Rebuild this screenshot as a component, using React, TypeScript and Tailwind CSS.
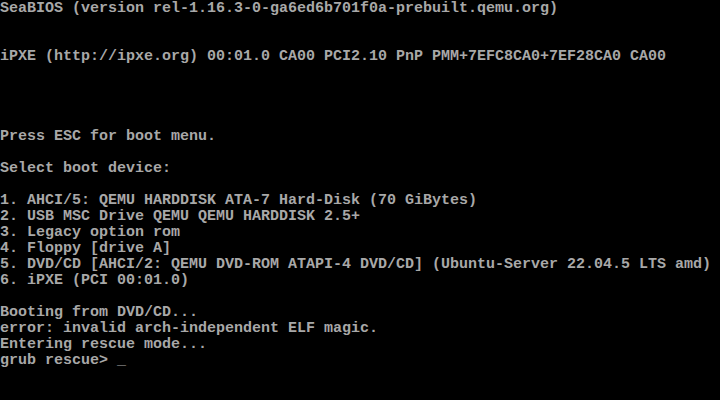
const rows = [
  'SeaBIOS (version rel-1.16.3-0-ga6ed6b701f0a-prebuilt.qemu.org)',
  '',
  '',
  'iPXE (http://ipxe.org) 00:01.0 CA00 PCI2.10 PnP PMM+7EFC8CA0+7EF28CA0 CA00',
  '',
  '',
  '',
  '',
  'Press ESC for boot menu.',
  '',
  'Select boot device:',
  '',
  '1. AHCI/5: QEMU HARDDISK ATA-7 Hard-Disk (70 GiBytes)',
  '2. USB MSC Drive QEMU QEMU HARDDISK 2.5+',
  '3. Legacy option rom',
  '4. Floppy [drive A]',
  '5. DVD/CD [AHCI/2: QEMU DVD-ROM ATAPI-4 DVD/CD] (Ubuntu-Server 22.04.5 LTS amd)',
  '6. iPXE (PCI 00:01.0)',
  '',
  'Booting from DVD/CD...',
  'error: invalid arch-independent ELF magic.',
  'Entering rescue mode...',
  'grub rescue> _',
  '',
  '',
]

export default function App() {
  return (
    <div className="w-[720px] h-[400px] bg-black overflow-hidden pt-px">
      <div className="font-['Liberation_Mono',monospace] text-[15px] leading-[16px] font-bold text-[#a8a8a8] whitespace-pre">
        {rows.map((line, i) => (
          <div key={i} className="h-4">
            {line}
          </div>
        ))}
      </div>
    </div>
  )
}
